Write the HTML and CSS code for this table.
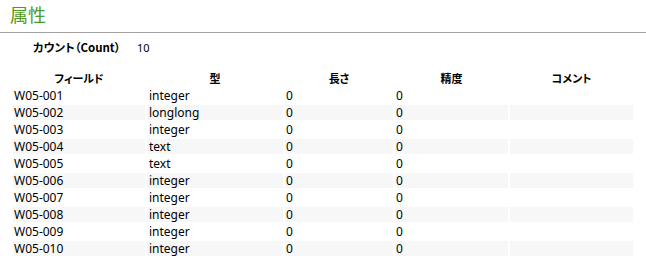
FILE: index.html
```html
<!DOCTYPE html>
<html lang="ja">
<head>
<meta charset="utf-8">
<title>属性</title>
<link rel="stylesheet" href="styles.css">
</head>
<body>
<h1 class="title">属性</h1>
<div class="count-row">
  <span class="count-label">カウント（Count）</span>
  <span class="count-value">10</span>
</div>
<table class="fields">
  <colgroup>
    <col class="c-field"><col class="c-type"><col class="c-len"><col class="c-prec"><col class="c-comment">
  </colgroup>
  <thead>
    <tr><th>フィールド</th><th>型</th><th>長さ</th><th>精度</th><th>コメント</th></tr>
  </thead>
  <tbody>
    <tr><td>W05-001</td><td class="pad">integer</td><td>0</td><td>0</td><td></td></tr>
    <tr><td>W05-002</td><td class="pad">longlong</td><td>0</td><td>0</td><td></td></tr>
    <tr><td>W05-003</td><td class="pad">integer</td><td>0</td><td>0</td><td></td></tr>
    <tr><td>W05-004</td><td class="pad">text</td><td>0</td><td>0</td><td></td></tr>
    <tr><td>W05-005</td><td class="pad">text</td><td>0</td><td>0</td><td></td></tr>
    <tr><td>W05-006</td><td class="pad">integer</td><td>0</td><td>0</td><td></td></tr>
    <tr><td>W05-007</td><td class="pad">integer</td><td>0</td><td>0</td><td></td></tr>
    <tr><td>W05-008</td><td class="pad">integer</td><td>0</td><td>0</td><td></td></tr>
    <tr><td>W05-009</td><td class="pad">integer</td><td>0</td><td>0</td><td></td></tr>
    <tr><td>W05-010</td><td class="pad">integer</td><td>0</td><td>0</td><td></td></tr>
  </tbody>
</table>
</body>
</html>
```
FILE: styles.css
```css
html, body {
  margin: 0;
  padding: 0;
  background: #ffffff;
}
body {
  font-family: "Noto Sans", "Noto Sans CJK JP", sans-serif;
  font-size: 12px;
  color: #000000;
}
.title {
  margin: 0;
  padding: 3px 10px 7px;
  font-family: "Noto Sans CJK JP", sans-serif;
  font-size: 18px;
  font-weight: normal;
  line-height: 22px;
  color: #4f9a22;
  border-bottom: 1px solid #a3a3a3;
}
.count-row {
  display: flex;
  margin-top: 7px;
  height: 15px;
  line-height: 15px;
  padding-left: 33px;
}
.count-label {
  width: 104px;
  font-family: "Noto Sans CJK JP", sans-serif;
  font-size: 11.5px;
  font-weight: bold;
  font-feature-settings: "palt";
}
.count-value {
  font-size: 11px;
  color: #000;
}
.fields {
  margin: 14px 0 0 11px;
  width: 624px;
  table-layout: fixed;
  border-collapse: separate;
  border-spacing: 2px;
}
.c-field { width: 132px; }
.c-type { width: 136px; }
.c-len { width: 108px; }
.c-prec { width: 113px; }
.c-comment { width: 123px; }
.fields th,
.fields td {
  height: 15px;
  padding: 0 1px;
  line-height: 15px;
  white-space: nowrap;
  overflow: hidden;
}
.fields th {
  font-family: "Noto Sans CJK JP", sans-serif;
  font-size: 11px;
  font-weight: bold;
  font-feature-settings: "palt";
  text-align: center;
}
.fields td {
  text-align: left;
}
.fields td.pad {
  padding-left: 2px;
}
.fields tbody tr:nth-child(even) td {
  background: #f7f7f7;
}
```
